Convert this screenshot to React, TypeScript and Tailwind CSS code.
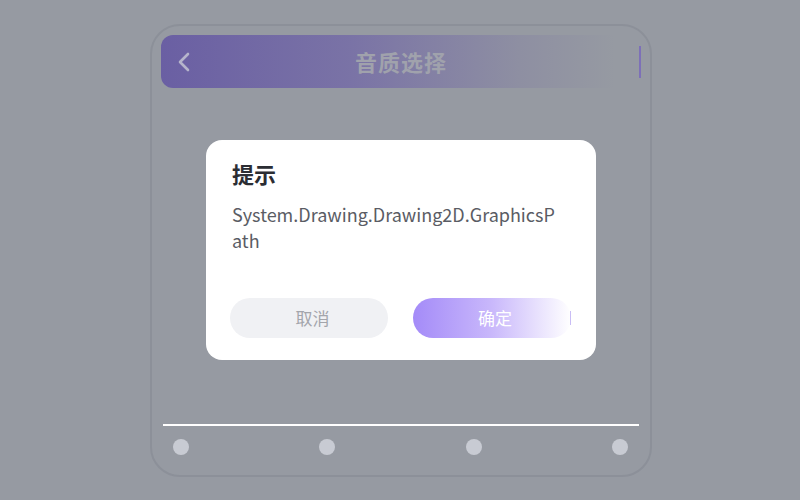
import React from "react";

export default function App() {
  const font = { fontFamily: '"Noto Sans CJK SC", "Noto Sans", sans-serif' };
  return (
    <div className="relative w-[800px] h-[500px] bg-[#969aa2] overflow-hidden" style={font}>
      <div className="pt-[24px] pl-[150px]">
        <div className="w-[502px] h-[453px] rounded-[30px] border-2 border-[#8c9099] px-[9px] pt-[9px] pb-[20px] flex flex-col">
          <div className="flex items-center h-[53px]">
            <div className="relative flex-1 h-full rounded-[12px] bg-[linear-gradient(90deg,#6a5fa3_0%,#7a73a6_40%,#8e8fa2_75%,#969aa2_95%)] flex items-center">
              <svg className="absolute left-[16px] top-1/2 -translate-y-1/2" width="14" height="22" viewBox="0 0 14 22">
                <path d="M11 3 L3 11 L11 19" fill="none" stroke="#b6b5cb" strokeWidth="2.6" strokeLinecap="round" strokeLinejoin="round" />
              </svg>
              <div className="flex-1 text-center text-[22px] font-bold text-[#a0a2ac] tracking-[1px] pl-[2px]">音质选择</div>
            </div>
            <div className="w-[2px] h-[32px] bg-[#7d70b8] mr-[0px]" />
          </div>
          <div className="flex-1" />
          <div className="mx-[2px] h-[2px] bg-white" />
          <div className="flex justify-between items-center pl-[12px] pr-[13px] mt-[13px]">
            <div className="w-[16px] h-[16px] rounded-full bg-[#c8cbd3]" />
            <div className="w-[16px] h-[16px] rounded-full bg-[#c8cbd3]" />
            <div className="w-[16px] h-[16px] rounded-full bg-[#c8cbd3]" />
            <div className="w-[16px] h-[16px] rounded-full bg-[#c8cbd3]" />
          </div>
        </div>
      </div>

      <div className="absolute left-[206px] top-[140px] w-[390px] h-[220px] bg-white rounded-[16px] pl-[26px] pt-[17px] flex flex-col">
        <div className="text-[22px] font-bold text-[#2b2d33] leading-[32px]">提示</div>
        <div className="mt-[12px] w-[330px] text-[18px] leading-[26px] text-[#5a5c64] break-all">
          System.Drawing.Drawing2D.GraphicsPath
        </div>
        <div className="flex-1" />
        <div className="flex gap-[25px] mb-[22px] -ml-[2px]">
          <div className="w-[158px] h-[40px] rounded-full bg-[#f0f1f4] flex items-center justify-center pl-[7px] text-[17px] text-[#a3a5ab]">取消</div>
          <div className="relative w-[158px] h-[40px] rounded-full bg-[linear-gradient(90deg,#a48bf8_0%,#c9b8fb_50%,#ffffff_100%)] flex items-center justify-center pl-[6px] text-[17px] text-white">
            确定
            <div className="absolute right-0 top-[13px] w-[1.5px] h-[14px] bg-[#c9bdf5]" />
          </div>
        </div>
      </div>
    </div>
  );
}
